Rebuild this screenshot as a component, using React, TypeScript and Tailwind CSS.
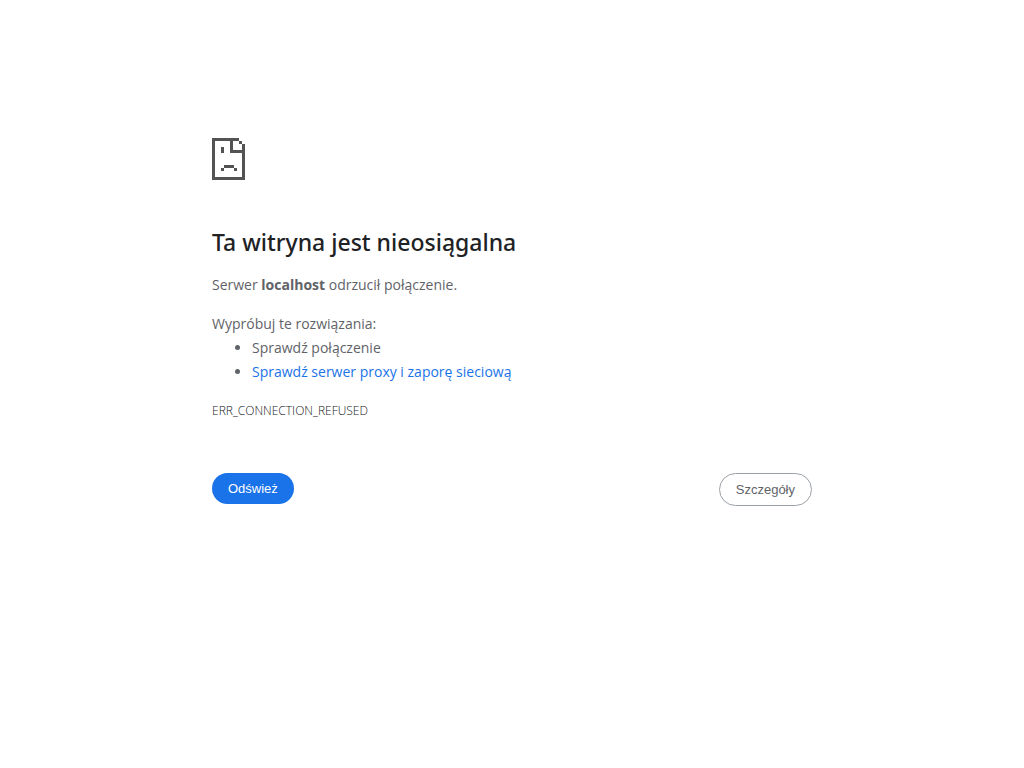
function SadPageIcon() {
  return (
    <svg width="33" height="42" viewBox="0 0 33 42" fill="#535353" shapeRendering="crispEdges" aria-hidden="true">
      <path d="M0 0H27V3H3V39H30V15H18V3H21V12H30V6H33V42H0Z" />
      <path d="M27 3H30V6H27ZM9 9H12V15H9ZM12 27H22V30H12ZM9 30H12V33H9ZM22 30H25V33H22Z" />
    </svg>
  );
}

export default function App() {
  return (
    <main className="mx-auto w-full max-w-[600px] pt-[138px] font-['Open_Sans','Noto_Sans',sans-serif] text-[14px] leading-6 text-[#5f6368]">
      <SadPageIcon />
      <h1 className="mt-12 font-['Noto_Sans','Open_Sans',sans-serif] text-[23px] leading-7 font-medium text-[#202124]">
        Ta witryna jest nieosiągalna
      </h1>
      <p className="mt-[17px]">
        Serwer <strong className="font-bold">localhost</strong> odrzucił połączenie.
      </p>
      <div className="mt-[15px]">
        <p>Wypróbuj te rozwiązania:</p>
        <ul className="list-disc pl-10">
          <li>Sprawdź połączenie</li>
          <li>
            <a href="#proxy" className="text-[#1a73e8]">
              Sprawdź serwer proxy i zaporę sieciową
            </a>
          </li>
        </ul>
      </div>
      <p className="mt-[15px] text-xs leading-6 font-light text-[#17191c]">ERR_CONNECTION_REFUSED</p>
      <div className="mt-[50px] flex items-start justify-between font-['Liberation_Sans',Arial,sans-serif] text-[13px] leading-[15px]">
        <button type="button" className="rounded-full bg-[#1a73e8] px-4 py-2 text-white">
          Odśwież
        </button>
        <button type="button" className="rounded-full border border-[#9aa0a6] bg-white px-4 py-2">
          Szczegóły
        </button>
      </div>
    </main>
  );
}
